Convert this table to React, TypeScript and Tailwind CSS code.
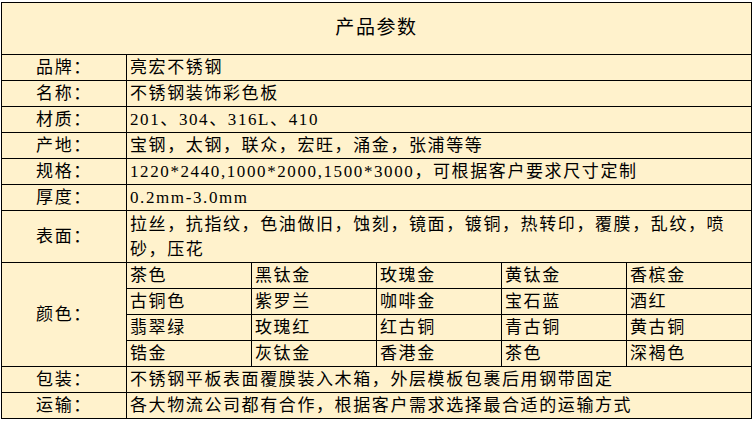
import React from "react";

const cell = "bg-[#FFF2CC] flex items-center";
const label = `${cell} justify-center`;
const value = `${cell} col-span-5 pl-[3px] whitespace-nowrap`;

const rows: [string, string][] = [
  ["品牌：", "亮宏不锈钢"],
  ["名称：", "不锈钢装饰彩色板"],
  ["材质：", "201、304、316L、410"],
  ["产地：", "宝钢，太钢，联众，宏旺，涌金，张浦等等"],
  ["规格：", "1220*2440,1000*2000,1500*3000，可根据客户要求尺寸定制"],
  ["厚度：", "0.2mm-3.0mm"],
];

const colors = [
  ["茶色", "黑钛金", "玫瑰金", "黄钛金", "香槟金"],
  ["古铜色", "紫罗兰", "咖啡金", "宝石蓝", "酒红"],
  ["翡翠绿", "玫瑰红", "红古铜", "青古铜", "黄古铜"],
  ["锆金", "灰钛金", "香港金", "茶色", "深褐色"],
];

export default function App() {
  return (
    <div
      className="w-[754px] h-[421px] bg-white pt-[2px] pl-px text-black text-[17px] tracking-[1.6px]"
      style={{ fontFamily: '"Liberation Serif", "Noto Sans CJK SC", serif' }}
    >
      <div className="w-[751px] bg-black p-px grid grid-cols-[repeat(6,124px)] grid-rows-[51px] auto-rows-[25px] gap-px">
        {/* title */}
        <div className={`${cell} col-span-6 justify-center text-[19px]`}>产品参数</div>

        {rows.map(([k, v]) => (
          <React.Fragment key={k}>
            <div className={label}>{k}</div>
            <div className={value}>{v}</div>
          </React.Fragment>
        ))}

        {/* surface, two lines */}
        <div className={`${label} row-span-2`}>表面：</div>
        <div className={`${cell} col-span-5 row-span-2 pl-[3px] whitespace-nowrap leading-[25px]`}>
          <div>
            <div>拉丝，抗指纹，色油做旧，蚀刻，镜面，镀铜，热转印，覆膜，乱纹，喷</div>
            <div>砂，压花</div>
          </div>
        </div>

        {/* colours */}
        <div className={`${label} row-span-4`}>颜色：</div>
        {colors.map((line, i) => (
          <React.Fragment key={i}>
            {line.map((c, j) => (
              <div key={j} className={`${cell} pl-[3px] whitespace-nowrap`}>
                {c}
              </div>
            ))}
          </React.Fragment>
        ))}

        <div className={label}>包装：</div>
        <div className={value}>不锈钢平板表面覆膜装入木箱，外层模板包裹后用钢带固定</div>
        <div className={label}>运输：</div>
        <div className={value}>各大物流公司都有合作，根据客户需求选择最合适的运输方式</div>
      </div>
    </div>
  );
}
